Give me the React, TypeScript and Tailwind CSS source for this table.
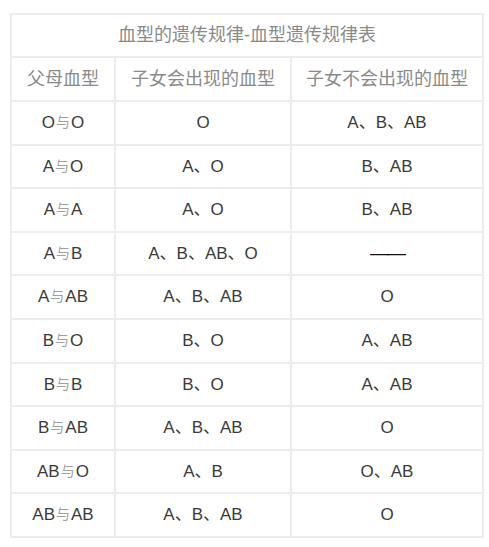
import React from 'react'

const rows: [string, string, string, string][] = [
  ['O', 'O', 'O', 'A、B、AB'],
  ['A', 'O', 'A、O', 'B、AB'],
  ['A', 'A', 'A、O', 'B、AB'],
  ['A', 'B', 'A、B、AB、O', '——'],
  ['A', 'AB', 'A、B、AB', 'O'],
  ['B', 'O', 'B、O', 'A、AB'],
  ['B', 'B', 'B、O', 'A、AB'],
  ['B', 'AB', 'A、B、AB', 'O'],
  ['AB', 'O', 'A、B', 'O、AB'],
  ['AB', 'AB', 'A、B、AB', 'O'],
]

const cell = 'border-2 border-[#ececec] text-center align-middle p-0'
const head = `${cell} font-normal text-[18px] text-[#8a8a8a]`
const body = `${cell} text-[17px] text-[#3a3a3a]`

export default function App() {
  return (
    <div
      className="min-h-screen bg-white pt-[13px] pl-[10px]"
      style={{ fontFamily: '"Liberation Sans", "Noto Sans CJK SC", sans-serif' }}
    >
      <table className="border-collapse table-fixed w-[472px]">
        <colgroup>
          <col className="w-[104px]" />
          <col className="w-[176px]" />
          <col className="w-[192px]" />
        </colgroup>
        <thead>
          <tr className="h-[43px]">
            <th colSpan={3} className={head}>
              血型的遗传规律-血型遗传规律表
            </th>
          </tr>
          <tr className="h-[44px]">
            <th className={head}>父母血型</th>
            <th className={head}>子女会出现的血型</th>
            <th className={head}>子女不会出现的血型</th>
          </tr>
        </thead>
        <tbody>
          {rows.map(([a, b, yes, no], i) => (
            <tr key={i} className="h-[43.6px]">
              <td className={body}>
                {a}
                <span className="mx-[1px] relative -top-[1px] text-[14px] text-[#a0a0a0]">与</span>
                {b}
              </td>
              <td className={body}>{yes}</td>
              <td className={body}>
                {no === '——' ? (
                  <span className="text-[19px] text-[#111] tracking-[-2px]">——</span>
                ) : (
                  no
                )}
              </td>
            </tr>
          ))}
        </tbody>
      </table>
    </div>
  )
}
